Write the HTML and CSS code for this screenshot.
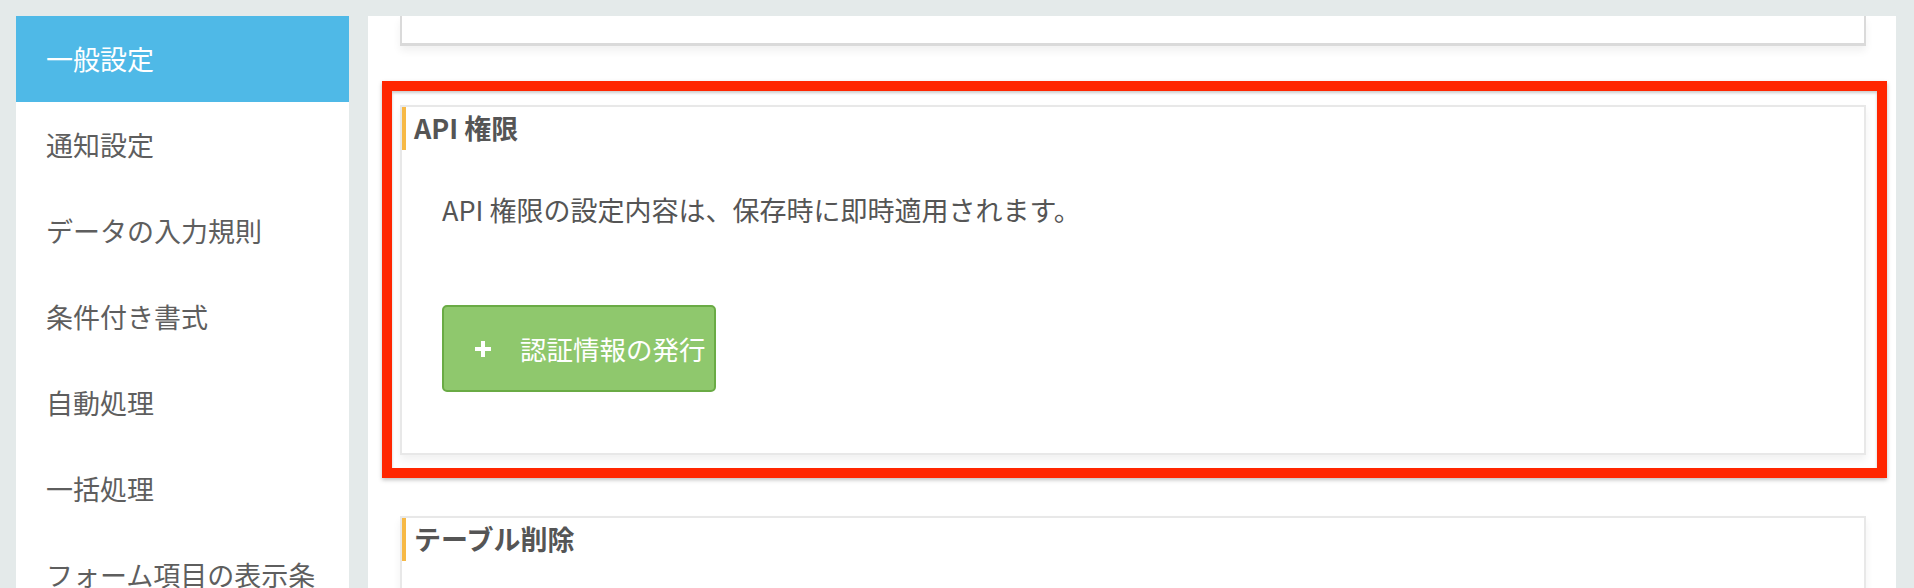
FILE: index.html
```html
<!DOCTYPE html>
<html lang="ja">
<head>
  <meta charset="UTF-8" />
  <meta name="viewport" content="width=device-width, initial-scale=1.0"/>
  <title>一般設定 | API 権限</title>
  <link rel="stylesheet" href="styles.css">
</head>
<body>

  <div class="layout">

    <!-- Settings menu -->
    <ul class="side-menu">
      <li class="menu-item active">一般設定</li>
      <li class="menu-item">通知設定</li>
      <li class="menu-item">データの入力規則</li>
      <li class="menu-item">条件付き書式</li>
      <li class="menu-item">自動処理</li>
      <li class="menu-item">一括処理</li>
      <li class="menu-item">フォーム項目の表示条件</li>
    </ul>

    <div class="main">

      <!-- previous panel, scrolled out of view -->
      <div class="panel panel-prev"></div>

      <div class="panel panel-api">
        <div class="highlight"></div>
        <h3 class="panel-title">API 権限</h3>
        <div class="panel-body">
          <p class="panel-text">API 権限の設定内容は、保存時に即時適用されます。</p>
          <button class="btn-issue" type="button">
            <svg class="plus" width="18" height="18" viewBox="0 0 18 18">
              <rect x="7" y="1" width="4" height="16" fill="#fff"/>
              <rect x="1" y="7" width="16" height="4" fill="#fff"/>
            </svg>
            <span>認証情報の発行</span>
          </button>
        </div>
      </div>

      <div class="panel panel-delete">
        <h3 class="panel-title">テーブル削除</h3>
        <div class="panel-body"></div>
      </div>

    </div>
  </div>

</body>
</html>
```

FILE: styles.css
```css
html, body {
  margin: 0;
  height: 100%;
}
body {
  background: #e4eaea;
  font-family: "Noto Sans CJK JP", "Noto Sans", sans-serif;
  color: #555;
  overflow: hidden;
}
.layout {
  display: flex;
  gap: 19px;
  height: 100vh;
  padding: 16px 18px 0 16px;
  box-sizing: border-box;
}

/* side menu */
.side-menu {
  width: 333px;
  flex-shrink: 0;
  margin: 0;
  padding: 0;
  list-style: none;
  background: #fff;
  overflow: hidden;
}
.menu-item {
  padding: 24.5px 30px 25.5px 30px;
  font-size: 27px;
  line-height: 36px;
  color: #5e5e5e;
}
.menu-item.active {
  background: #4fb9e7;
  color: #fff;
}

/* main area */
.main {
  flex: 1;
  background: #fff;
  padding: 0 30px 0 32px;
  overflow: hidden;
}
.panel {
  position: relative;
  background: #fff;
  border: 2px solid #e8e8e8;
  box-shadow: 0 5px 8px rgba(0, 0, 0, 0.06);
}
.panel-prev {
  height: 27px;
  border-top: none;
  border-color: #dadada;
  border-bottom-width: 3px;
  margin-bottom: 59px;
}
.panel-api {
  margin-bottom: 61px;
}
.panel-title {
  margin: 0;
  height: 43px;
  padding-left: 8px;
  border-left: 4px solid #f7b946;
  font-size: 27px;
  font-weight: bold;
  line-height: 41px;
  color: #555;
}
.panel-body {
  padding: 42px 40px 61px 40px;
}
.panel-delete .panel-body {
  height: 120px;
}
.panel-text {
  margin: 0 0 77px 0;
  font-size: 27px;
  line-height: 36px;
  color: #555;
}
.btn-issue {
  display: inline-flex;
  align-items: center;
  gap: 28px;
  height: 87px;
  padding: 0 8px 0 30px;
  border: 2px solid #6aab45;
  border-radius: 5px;
  background: #8fc86d;
  color: #fff;
  font-family: inherit;
  font-size: 26.5px;
  cursor: pointer;
}
.plus {
  display: block;
}

/* red annotation frame around the API panel */
.highlight {
  position: absolute;
  left: -20px;
  right: -23px;
  top: -26px;
  bottom: -25px;
  border: 10px solid #ff2600;
  box-shadow: 0 2px 4px rgba(0, 0, 0, 0.25), inset 0 2px 3px rgba(0, 0, 0, 0.2);
  pointer-events: none;
}
```
